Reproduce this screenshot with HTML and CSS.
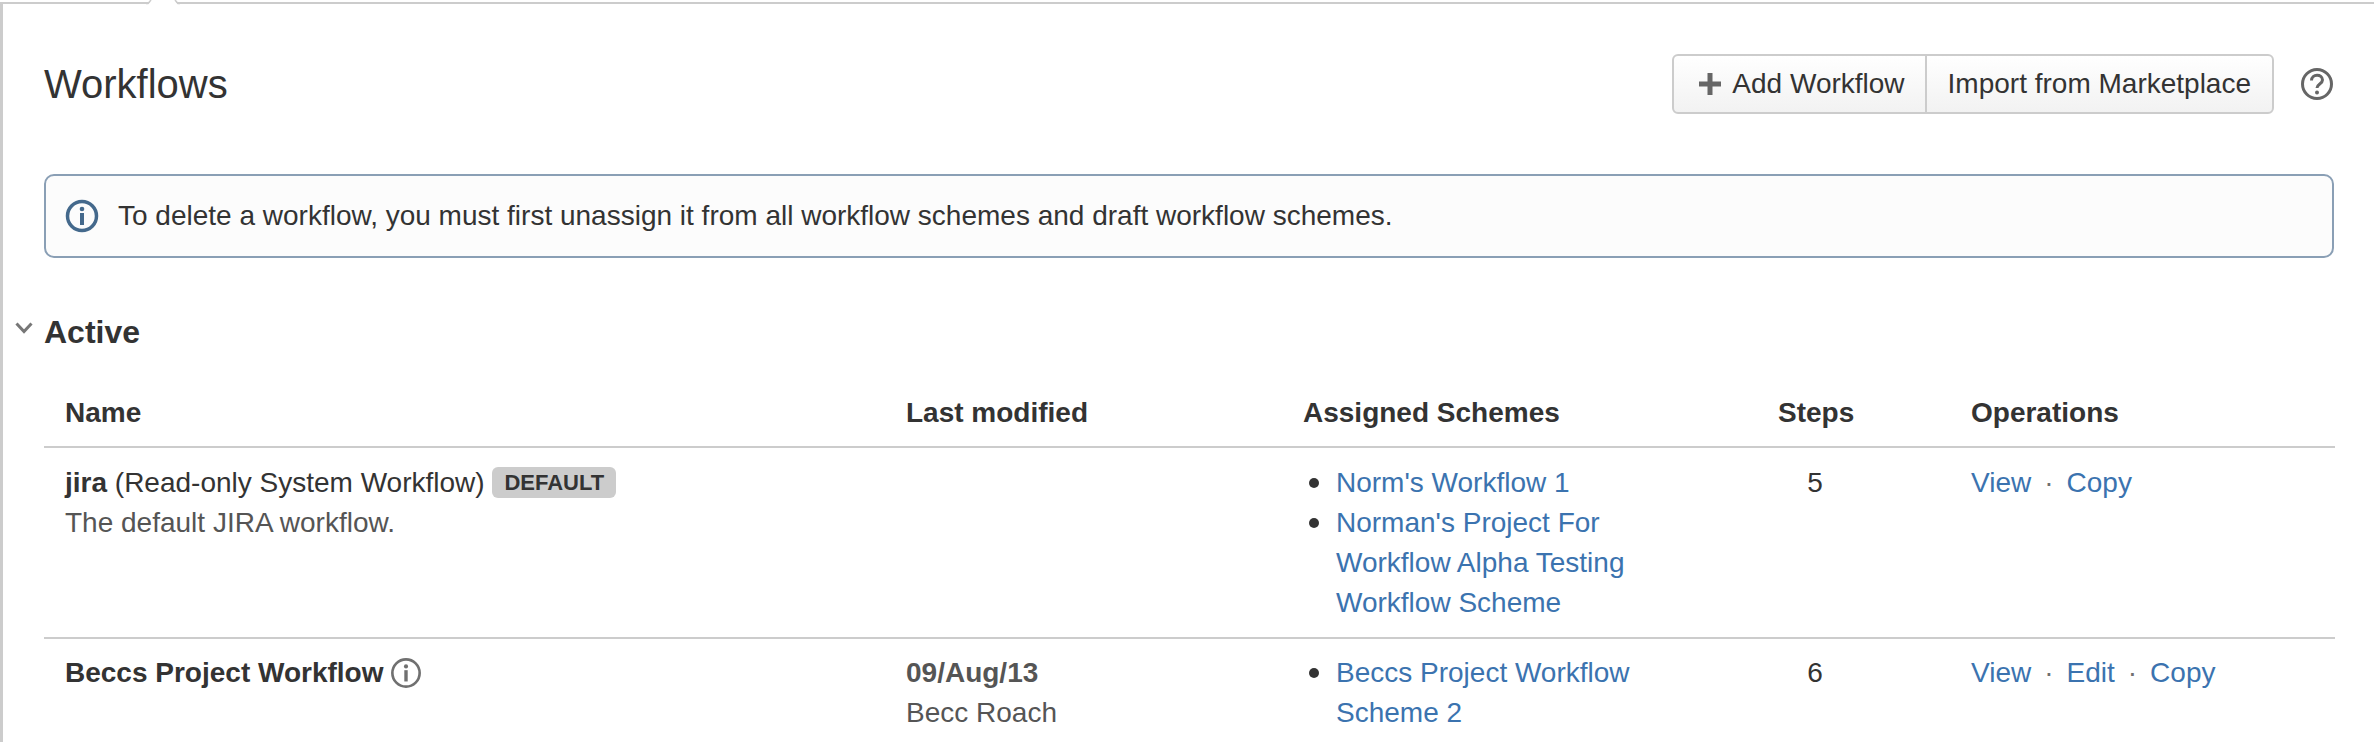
FILE: index.html
```html
<!DOCTYPE html>
<html lang="en">
<head>
    <meta charset="UTF-8">
    <meta name="viewport" content="width=device-width, initial-scale=1.0">
    <title>Workflows</title>
    <link rel="stylesheet" href="styles.css">
</head>
<body>
    <div class="page">
        <svg class="notch" width="34" height="6" viewBox="0 0 34 6">
            <path d="M0 4.5 H2 L6 0 H28 L32 4.5 H34 V6 H0 Z" fill="#fff"/>
            <path d="M0 3.5 H2 L5 0 M34 3.5 H32 L29 0" fill="none" stroke="#ccc" stroke-width="1.5"/>
        </svg>

        <div class="page-header">
            <h1 class="title">Workflows</h1>
            <div class="actions">
                <div class="button-group">
                    <a class="button button-add">
                        <svg class="plus" width="22" height="22" viewBox="0 0 22 22">
                            <path d="M8.5 0 H13.5 V8.5 H22 V13.5 H13.5 V22 H8.5 V13.5 H0 V8.5 H8.5 Z" fill="#666"/>
                        </svg>
                        Add Workflow
                    </a>
                    <a class="button button-import">Import from Marketplace</a>
                </div>
                <svg class="help" width="34" height="34" viewBox="0 0 34 34">
                    <circle cx="17" cy="17" r="14.5" fill="none" stroke="#666" stroke-width="3"/>
                    <path d="M11.5 13.5 C11.5 6.5 22.5 6.5 22.5 13 C22.5 17 17 17 17 21" fill="none" stroke="#666" stroke-width="3"/>
                    <circle cx="17" cy="25.5" r="2" fill="#666"/>
                </svg>
            </div>
        </div>

        <div class="message">
            <svg class="message-icon" width="34" height="34" viewBox="0 0 34 34">
                <circle cx="17" cy="17" r="14.5" fill="none" stroke="#44698c" stroke-width="3.5"/>
                <rect x="15" y="14" width="4" height="12" fill="#44698c"/>
                <circle cx="17" cy="10" r="2.3" fill="#44698c"/>
            </svg>
            To delete a workflow, you must first unassign it from all workflow schemes and draft workflow schemes.
        </div>

        <h2 class="section-title">
            <svg class="chevron" width="18" height="12" viewBox="0 0 18 12">
                <path d="M1.5 1.5 L9 9.5 L16.5 1.5" fill="none" stroke="#777" stroke-width="3"/>
            </svg>
            Active
        </h2>

        <table class="workflows">
            <thead>
                <tr>
                    <th class="col-name">Name</th>
                    <th class="col-modified">Last modified</th>
                    <th class="col-schemes">Assigned Schemes</th>
                    <th class="col-steps">Steps</th>
                    <th class="col-ops">Operations</th>
                </tr>
            </thead>
            <tbody>
                <tr>
                    <td>
                        <strong>jira</strong> (Read-only System Workflow)
                        <span class="badge">Default</span>
                        <div class="muted">The default JIRA workflow.</div>
                    </td>
                    <td></td>
                    <td>
                        <ul class="schemes">
                            <li><a href="#">Norm's Workflow 1</a></li>
                            <li><a href="#">Norman's Project For Workflow Alpha Testing Workflow Scheme</a></li>
                        </ul>
                    </td>
                    <td class="col-steps">5</td>
                    <td class="ops"><a href="#">View</a><a href="#">Copy</a></td>
                </tr>
                <tr>
                    <td>
                        <strong>Beccs Project Workflow</strong>
                        <svg class="row-info" width="32" height="32" viewBox="0 0 34 34">
                            <circle cx="17" cy="17" r="14.5" fill="none" stroke="#707070" stroke-width="2.8"/>
                            <rect x="15.2" y="14" width="3.6" height="12" fill="#707070"/>
                            <circle cx="17" cy="10" r="2.2" fill="#707070"/>
                        </svg>
                    </td>
                    <td class="muted">
                        <strong>09/Aug/13</strong>
                        <div>Becc Roach</div>
                    </td>
                    <td>
                        <ul class="schemes">
                            <li><a href="#">Beccs Project Workflow Scheme 2</a></li>
                        </ul>
                    </td>
                    <td class="col-steps">6</td>
                    <td class="ops"><a href="#">View</a><a href="#">Edit</a><a href="#">Copy</a></td>
                </tr>
            </tbody>
        </table>
    </div>
</body>
</html>
```

FILE: styles.css
```css
body {
    margin: 0;
    background-color: #fff;
    color: #333;
    font-family: "Liberation Sans", Arial, sans-serif;
    font-size: 28px;
    line-height: 40px;
    overflow: hidden;
}

a {
    color: #3b73af;
    text-decoration: none;
}

.page {
    position: relative;
    height: 742px;
    box-sizing: border-box;
    margin-top: 2px;
    padding: 50px 40px 0 41px;
    border-top: 2px solid #ccc;
    border-left: 3px solid #ccc;
}

.notch {
    position: absolute;
    top: -4px;
    left: 143px;
}

.page-header {
    display: flex;
    justify-content: space-between;
    align-items: center;
}

.title {
    margin: 0;
    font-size: 40px;
    font-weight: normal;
    line-height: 60px;
}

.actions {
    display: flex;
    align-items: center;
    gap: 26px;
}

.button-group {
    display: flex;
    height: 60px;
    box-sizing: border-box;
    border: 2px solid #ccc;
    border-radius: 6px;
    background: linear-gradient(#fff, #f2f2f2);
}

.button {
    display: flex;
    align-items: center;
    color: #333;
}

.button-add {
    gap: 11px;
    padding: 0 20px 0 25px;
}

.button-import {
    padding: 0 21px;
    border-left: 2px solid #ccc;
}

.help {
    display: block;
}

.message {
    display: flex;
    align-items: center;
    gap: 19px;
    height: 84px;
    box-sizing: border-box;
    margin-top: 60px;
    padding: 0 20px 0 19px;
    border: 2px solid #8a9fb5;
    border-radius: 10px;
    background-color: #fcfcfc;
}

.section-title {
    position: relative;
    margin: 54px 0 0;
    font-size: 32px;
    line-height: 40px;
}

.chevron {
    position: absolute;
    top: 10px;
    left: -29px;
}

.workflows {
    width: 100%;
    margin-top: 41px;
    border-collapse: collapse;
    table-layout: fixed;
}

.workflows th,
.workflows td {
    padding: 0 21px;
    text-align: left;
    vertical-align: top;
}

.workflows th {
    padding-bottom: 13px;
    border-bottom: 2px solid #ccc;
    font-weight: bold;
}

.workflows td {
    padding-top: 15px;
    padding-bottom: 14px;
}

.workflows tbody tr + tr td {
    padding-top: 14px;
    border-top: 2px solid #ccc;
}

.col-name { width: 799px; }
.col-modified { width: 355px; }
.col-schemes { width: 433px; }
.col-ops { width: 343px; }

.workflows .col-steps {
    width: 74px;
    padding-right: 98px;
    text-align: center;
}

.muted {
    color: #555;
}

.badge {
    display: inline-block;
    padding: 0 12px;
    border-radius: 6px;
    background-color: #ccc;
    color: #333;
    font-size: 22px;
    font-weight: bold;
    line-height: 31px;
    text-transform: uppercase;
    vertical-align: 2px;
}

.row-info {
    margin-left: -1px;
    vertical-align: -7px;
}

.schemes {
    max-width: 340px;
    margin: 0;
    padding-left: 33px;
    list-style: none;
}

.schemes li {
    position: relative;
}

.schemes li::before {
    content: "";
    position: absolute;
    top: 15px;
    left: -27px;
    width: 10px;
    height: 10px;
    border-radius: 50%;
    background-color: #333;
}

.ops a + a::before {
    content: "\00b7";
    display: inline-block;
    margin: 0 13px;
    color: #707070;
}
```
